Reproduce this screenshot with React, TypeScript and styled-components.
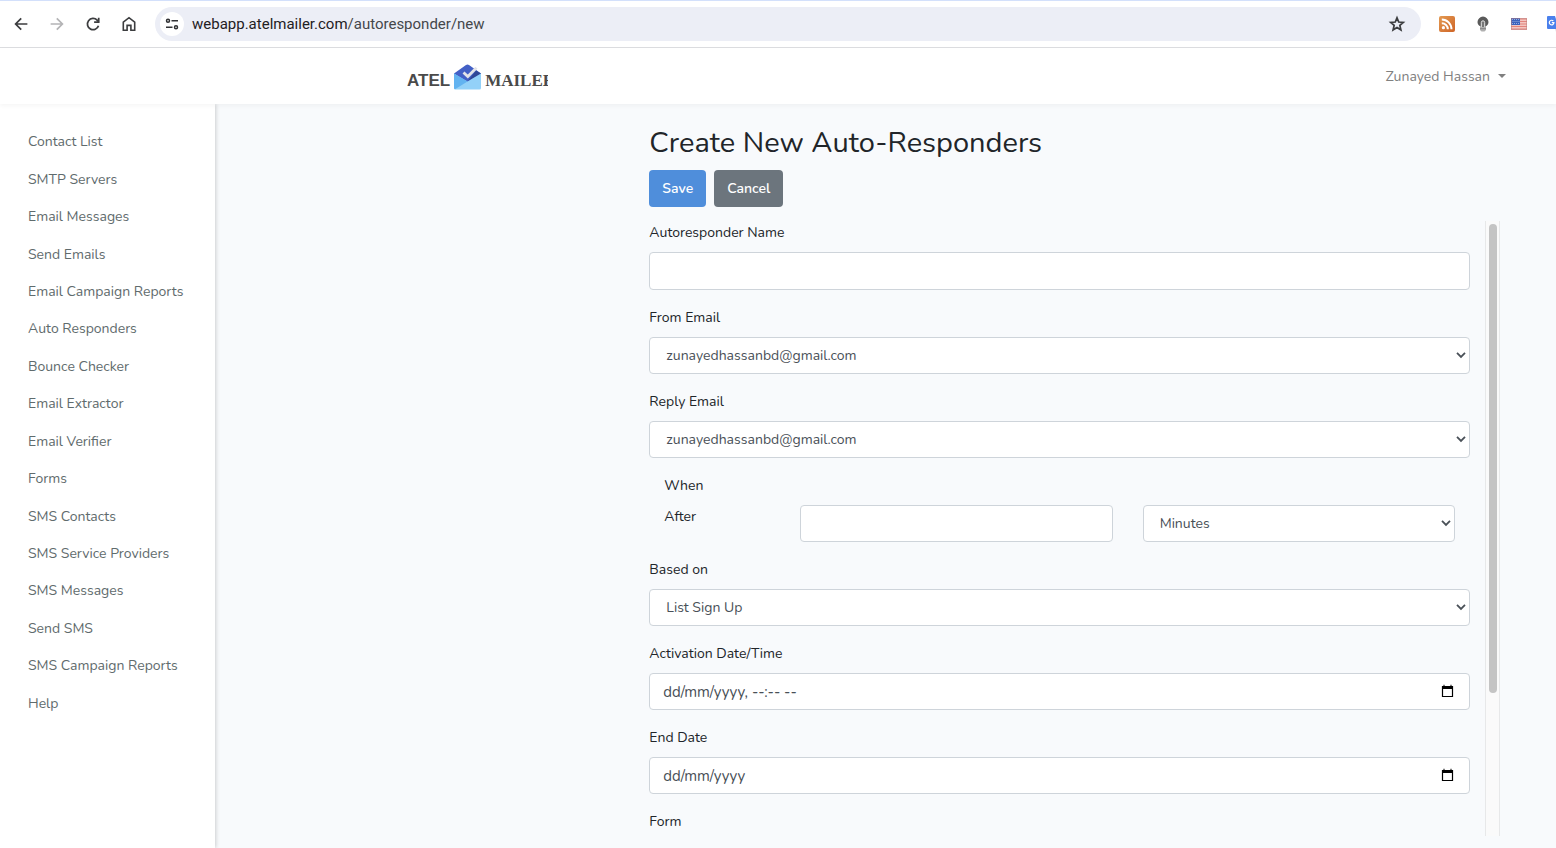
import React, { useState } from "react";
import styled, { createGlobalStyle } from "styled-components";

const GlobalStyle = createGlobalStyle`
  *, *::before, *::after { box-sizing: border-box; }
  body {
    margin: 0;
    background: #f8fafc;
    color: #212529;
    font-family: Nunito, "Noto Sans", sans-serif;
    font-size: 14px;
    line-height: 23px;
  }
  button, input, select { font: inherit; }
`;

const Shell = styled.div`
  display: flex;
  flex-direction: column;
  height: 100vh;
  overflow: hidden;
`;

/* Browser toolbar */
const Toolbar = styled.div`
  display: flex;
  align-items: center;
  flex: none;
  height: 48px;
  padding-left: 3px;
  background: #ffffff;
  border-top: 1px solid #d3e0fb;
  border-bottom: 1px solid #dcdde0;
  overflow: hidden;
`;

const ToolButton = styled.button<{ $dim?: boolean }>`
  display: grid;
  place-items: center;
  flex: none;
  width: 36px;
  height: 36px;
  padding: 0;
  border: 0;
  background: none;
  color: ${(p) => (p.$dim ? "#b4b4b6" : "#3c3d3f")};
`;

const AddressBar = styled.div`
  display: flex;
  align-items: center;
  flex: 1;
  height: 34px;
  margin: 0 8px;
  padding: 0 6px 0 5px;
  border-radius: 17px;
  background: #eceef6;
`;

const SiteButton = styled.button`
  display: grid;
  place-items: center;
  flex: none;
  width: 24px;
  height: 24px;
  padding: 0;
  border: 0;
  border-radius: 50%;
  background: #ffffff;
  color: #303134;
`;

const Url = styled.div`
  flex: 1;
  padding-left: 8px;
  font-family: Roboto, sans-serif;
  font-size: 15px;
  color: #44474b;
  span { color: #1f2023; }
`;

const Extensions = styled.div`
  display: flex;
  flex: none;
  width: 127px;
  overflow: hidden;
`;

/* Application header */
const Navbar = styled.header`
  display: flex;
  align-items: center;
  justify-content: space-between;
  flex: none;
  position: relative;
  z-index: 2;
  height: 56px;
  padding: 0 50px 0 407px;
  background: #ffffff;
  box-shadow: 0 2px 4px rgba(0, 0, 0, 0.04);
`;

const Brand = styled.a`
  display: flex;
  align-items: center;
  width: 141px;
  gap: 4px;
  padding-top: 2px;
  overflow: hidden;
  color: #4a4a4a;
  font: bold 17px/30px "Liberation Sans", sans-serif;
  text-decoration: none;
  white-space: nowrap;
  svg { flex: none; }
`;

const BrandWord = styled.span<{ $serif?: boolean }>`
  padding-top: 8px;
  font-family: ${(p) => (p.$serif ? '"Liberation Serif", serif' : "inherit")};
`;

const UserMenu = styled.button`
  display: flex;
  align-items: center;
  gap: 8px;
  padding: 0;
  border: 0;
  background: none;
  color: #808080;
  &::after {
    content: "";
    border: 4px solid transparent;
    border-top-color: currentColor;
    border-bottom: 0;
  }
`;

const Body = styled.div`
  display: flex;
  flex: 1;
  min-height: 0;
`;

const Sidebar = styled.nav`
  flex: none;
  width: 215px;
  padding: 19px 0 0 28px;
  background: #ffffff;
  box-shadow: 1px 0 4px rgba(0, 0, 0, 0.18);
`;

const MenuList = styled.ul`
  display: grid;
  grid-auto-rows: 1fr;
  align-items: center;
  height: 599px;
  margin: 0;
  padding: 0;
  list-style: none;
`;

const MenuLink = styled.a`
  color: #5f6b6d;
  text-decoration: none;
`;

const Main = styled.main`
  display: grid;
  grid-template-columns: 1fr 2fr;
  flex: 1;
  min-width: 0;
  padding: 20px 56px 12px 9px;
`;

const Panel = styled.section`
  display: flex;
  flex-direction: column;
  grid-column: 2;
  min-width: 0;
  min-height: 0;
`;

const Title = styled.h1`
  margin: 0 0 8px;
  font-size: 29px;
  font-weight: 400;
  line-height: 38px;
`;

const Actions = styled.div`
  display: flex;
  gap: 8px;
  margin-bottom: 14px;
`;

const Button = styled.button<{ $primary?: boolean }>`
  height: 37px;
  padding: 0 13px;
  border: 0;
  border-radius: 4px;
  background: ${(p) => (p.$primary ? "#4f8edb" : "#6c757d")};
  color: #ffffff;
  font-weight: 600;
`;

const ScrollFrame = styled.div`
  display: flex;
  flex: 1;
  min-height: 0;
`;

const Form = styled.form`
  flex: 1;
  padding: 0 15px 126px 0;
  overflow-y: auto;
  scrollbar-width: none;
`;

const Track = styled.div`
  flex: none;
  width: 15px;
  padding: 3px;
  border: 1px solid #e7e8e9;
  border-width: 0 1px;
  background: #fafafa;
`;

const Thumb = styled.div`
  width: 8px;
  height: 77%;
  border-radius: 4px;
  background: #c4c4c4;
`;

const Field = styled.div`
  margin-bottom: 16px;
`;

const Label = styled.label`
  display: block;
  margin-bottom: 8px;
`;

const Control = styled.div<{ $tall?: boolean }>`
  display: flex;
  align-items: center;
  height: ${(p) => (p.$tall ? 38 : 37)}px;
  padding-right: 3px;
  border: 1px solid #ced4da;
  border-radius: 4px;
  background: #ffffff;
  color: #495057;
`;

const Input = styled.input`
  flex: 1;
  min-width: 0;
  height: 35px;
  padding: 0 13px;
  border: 0;
  background: none;
  color: #495057;
  font-size: 15px;
  outline: 0;
  &::placeholder { color: #495057; opacity: 1; }
`;

const Select = styled.select`
  flex: 1;
  min-width: 0;
  height: 35px;
  padding: 0 16px;
  border: 0;
  appearance: none;
  background: none;
  color: #495057;
  outline: 0;
`;

const PickerButton = styled.button`
  display: grid;
  flex: none;
  margin-right: 12px;
  padding: 0 0 1px;
  border: 0;
  background: none;
  color: #000000;
`;

const Timing = styled.fieldset`
  margin: 0 0 16px;
  padding: 0 15px;
  border: 0;
`;

const Legend = styled.legend`
  margin-bottom: 8px;
  padding: 0;
`;

const TimingRow = styled.div`
  display: grid;
  grid-template-columns: 106px 1fr 1fr;
  gap: 30px;
  height: 37px;
`;

const Glyph = styled.svg.attrs({ viewBox: "0 0 24 24", fill: "none", stroke: "currentColor" })`
  width: 18px;
  height: 18px;
  stroke-width: 2.3;
`;

const BackIcon = () => (
  <Glyph><path d="M20.500 12H5.500M12.300 4.500 4.800 12l7.500 7.500" /></Glyph>
);

const ForwardIcon = () => (
  <Glyph><path d="M3.500 12h15M11.700 4.500l7.500 7.500-7.500 7.500" /></Glyph>
);

const ReloadIcon = () => (
  <Glyph>
    <path d="M19.300 14.200A7.500 7.500 0 1 1 17.500 6.900L19.500 9" />
    <path d="M19.600 3.800V9.600H13.500" />
  </Glyph>
);

const StarIcon = () => (
  <Glyph><path d="m12 3.800 2.300 5.600 6.100.5-4.600 4 1.400 5.900-5.200-3.100-5.200 3.100 1.400-5.900-4.600-4 6.100-.5z" /></Glyph>
);

const HomeIcon = () => (
  <svg width="16" height="16" viewBox="0 0 16 16" fill="none" stroke="currentColor" strokeWidth="1.6">
    <path d="M2.3 6.2 8 1.7l5.7 4.5v8.1H9.9V9.4H6.1v4.9H2.3z" />
  </svg>
);

const TuneIcon = () => (
  <svg width="14" height="12" viewBox="0 0 14 12" fill="none" stroke="currentColor" strokeWidth="1.5">
    <circle cx="3" cy="2.8" r="1.5" />
    <path d="M6.5 2.8H13M1 9.2h6.500" />
    <circle cx="11" cy="9.2" r="1.5" />
  </svg>
);

const FeedIcon = () => (
  <svg width="16" height="16" viewBox="0 0 16 16">
    <defs>
      <linearGradient id="feed" x1="0" y1="0" x2="1" y2="1">
        <stop offset="0" stopColor="#e39a52" />
        <stop offset="1" stopColor="#cf6426" />
      </linearGradient>
    </defs>
    <rect width="16" height="16" rx="2" fill="url(#feed)" />
    <circle cx="4.4" cy="11.7" r="1.6" fill="#fff" />
    <path d="M2.8 7.2a6 6 0 0 1 6 6M2.800 3.500a9.700 9.700 0 0 1 9.700 9.700" fill="none" stroke="#fff" strokeWidth="2" />
  </svg>
);

const BulbIcon = () => (
  <svg width="14" height="16" viewBox="0 0 14 16">
    <path d="M7 .6a5.500 5.500 0 0 0-5.500 5.300c0 2.300 1.300 3.600 3 4.300V11h5v-.8c1.700-.7 3-2 3-4.300A5.500 5.500 0 0 0 7 .6z" fill="#5a5a5a" />
    <path d="M5.300 12V6.500a1.700 1.700 0 0 1 3.400 0V12" fill="#777" stroke="#e4e4e4" strokeWidth="1" />
    <path d="M4 11h6v3l-1.500 1.500h-3L4 14z" fill="#b0b0b0" />
    <path d="M4 12.700h6" stroke="#777" strokeWidth=".8" />
  </svg>
);

const FlagIcon = () => (
  <svg width="16" height="12" viewBox="0 0 16 12">
    <rect width="16" height="12" fill="#f3c6c1" />
    <path d="M0 1h16M0 3.500h16M0 6h16M0 8.500h16M0 11h16" stroke="#e2847d" strokeWidth="1.200" />
    <rect width="9" height="7" fill="#3c62bd" />
    <path d="M1 1.500h7M1.500 3.500h7M1 5.500h7" stroke="#a9bce8" strokeWidth=".8" strokeDasharray="1 1" />
    <rect x=".5" y=".5" width="15" height="11" fill="none" stroke="#b98080" strokeOpacity=".5" />
  </svg>
);

const TranslateIcon = () => (
  <svg width="16" height="16" viewBox="0 0 16 16">
    <path d="M6 4h9a1 1 0 0 1 1 1v10a1 1 0 0 1-1 1H9z" fill="#d5d8dc" />
    <path d="M1 0h7l4 13H1a1 1 0 0 1-1-1V1a1 1 0 0 1 1-1z" fill="#4a80ec" />
    <path d="M9 13h3l-3 3z" fill="#3a5fc0" />
    <path d="M6.300 5A2.300 2.300 0 1 0 6.900 6.700H4.800" fill="none" stroke="#fff" strokeWidth="1.200" />
  </svg>
);

const EnvelopeLogo = () => (
  <svg width="27" height="26" viewBox="0 0 27 26">
    <path d="M0 9.500 12 .9q1.500-1 3 0L27 9.500V18H0z" fill="#4360c6" />
    <path d="M13.500 17.500 27 9.500 22 6.500z" fill="#304796" />
    <path d="M0 9.500 13.500 17.500 27 9.500V24a1.500 1.500 0 0 1-1.500 1.500h-24A1.500 1.500 0 0 1 0 24z" fill="#93d1f8" />
    <path d="M0 9.500 13.500 17.500 1 25.300A1.500 1.500 0 0 1 0 24z" fill="#62b3f0" />
    <path d="m9.500 8.500 4.300 4L22.500 3.800" fill="none" stroke="#e4e4e8" strokeWidth="2.800" />
  </svg>
);

const Chevron = () => (
  <svg width="10" height="7" viewBox="0 0 10 7" fill="none" stroke="#495057" strokeWidth="1.800">
    <path d="m1 .9 4 4 4-4" />
  </svg>
);

const CalendarIcon = () => (
  <svg width="13" height="14" viewBox="0 0 13 14">
    <path d="M1.500 2.500h10v10h-10z" fill="none" stroke="currentColor" strokeWidth="1.200" />
    <path d="M1 2h11v3H1zM2.500 .7h1V2h-1zM9.500 .7h1V2h-1z" fill="currentColor" />
  </svg>
);

const menu = [
  "Contact List", "SMTP Servers", "Email Messages", "Send Emails",
  "Email Campaign Reports", "Auto Responders", "Bounce Checker", "Email Extractor",
  "Email Verifier", "Forms", "SMS Contacts", "SMS Service Providers",
  "SMS Messages", "Send SMS", "SMS Campaign Reports", "Help",
];

const SelectBox = ({ id, value, label }: { id: string; value: string; label?: string }) => (
  <Control>
    <Select id={id} aria-label={label} defaultValue={value}>
      <option>{value}</option>
    </Select>
    <Chevron />
  </Control>
);

const SelectField = ({ id, label, value }: { id: string; label: string; value: string }) => (
  <Field>
    <Label htmlFor={id}>{label}</Label>
    <SelectBox id={id} value={value} />
  </Field>
);

const DateField = ({ id, label, format }: { id: string; label: string; format: string }) => (
  <Field>
    <Label htmlFor={id}>{label}</Label>
    <Control>
      <Input id={id} placeholder={format} />
      <PickerButton type="button" aria-label={`Pick ${label}`}><CalendarIcon /></PickerButton>
    </Control>
  </Field>
);

export default function App() {
  const [offset, setOffset] = useState(0);

  const onScroll = (e: React.UIEvent<HTMLFormElement>) => {
    const { scrollTop, scrollHeight, clientHeight } = e.currentTarget;
    setOffset((scrollTop / scrollHeight) * clientHeight);
  };

  return (
    <Shell>
      <GlobalStyle />
      <Toolbar>
        <ToolButton aria-label="Back"><BackIcon /></ToolButton>
        <ToolButton aria-label="Forward" $dim><ForwardIcon /></ToolButton>
        <ToolButton aria-label="Reload"><ReloadIcon /></ToolButton>
        <ToolButton aria-label="Home"><HomeIcon /></ToolButton>
        <AddressBar>
          <SiteButton aria-label="Site information"><TuneIcon /></SiteButton>
          <Url><span>webapp.atelmailer.com</span>/autoresponder/new</Url>
          <ToolButton aria-label="Bookmark"><StarIcon /></ToolButton>
        </AddressBar>
        <Extensions>
          <ToolButton aria-label="Feeds"><FeedIcon /></ToolButton>
          <ToolButton aria-label="Lights"><BulbIcon /></ToolButton>
          <ToolButton aria-label="Region"><FlagIcon /></ToolButton>
          <ToolButton aria-label="Translate"><TranslateIcon /></ToolButton>
        </Extensions>
      </Toolbar>
      <Navbar>
        <Brand href="#">
          <BrandWord>ATEL</BrandWord>
          <EnvelopeLogo />
          <BrandWord $serif>MAILER</BrandWord>
        </Brand>
        <UserMenu>Zunayed Hassan</UserMenu>
      </Navbar>
      <Body>
        <Sidebar>
          <MenuList>
            {menu.map((item) => (
              <li key={item}><MenuLink href="#">{item}</MenuLink></li>
            ))}
          </MenuList>
        </Sidebar>
        <Main>
          <Panel>
            <Title>Create New Auto-Responders</Title>
            <Actions>
              <Button type="submit" form="responder" $primary>Save</Button>
              <Button type="button">Cancel</Button>
            </Actions>
            <ScrollFrame>
              <Form id="responder" onScroll={onScroll}>
                <Field>
                  <Label htmlFor="name">Autoresponder Name</Label>
                  <Control $tall><Input id="name" /></Control>
                </Field>
                <SelectField id="from" label="From Email" value="zunayedhassanbd@gmail.com" />
                <SelectField id="reply" label="Reply Email" value="zunayedhassanbd@gmail.com" />
                <Timing>
                  <Legend>When</Legend>
                  <TimingRow>
                    <Label htmlFor="after">After</Label>
                    <Control><Input id="after" /></Control>
                    <SelectBox id="unit" label="Unit" value="Minutes" />
                  </TimingRow>
                </Timing>
                <SelectField id="based" label="Based on" value="List Sign Up" />
                <DateField id="activation" label="Activation Date/Time" format="dd/mm/yyyy, --:-- --" />
                <DateField id="end" label="End Date" format="dd/mm/yyyy" />
                <SelectField id="form" label="Form" value="" />
              </Form>
              <Track>
                <Thumb style={{ transform: `translateY(${offset}px)` }} />
              </Track>
            </ScrollFrame>
          </Panel>
        </Main>
      </Body>
    </Shell>
  );
}
